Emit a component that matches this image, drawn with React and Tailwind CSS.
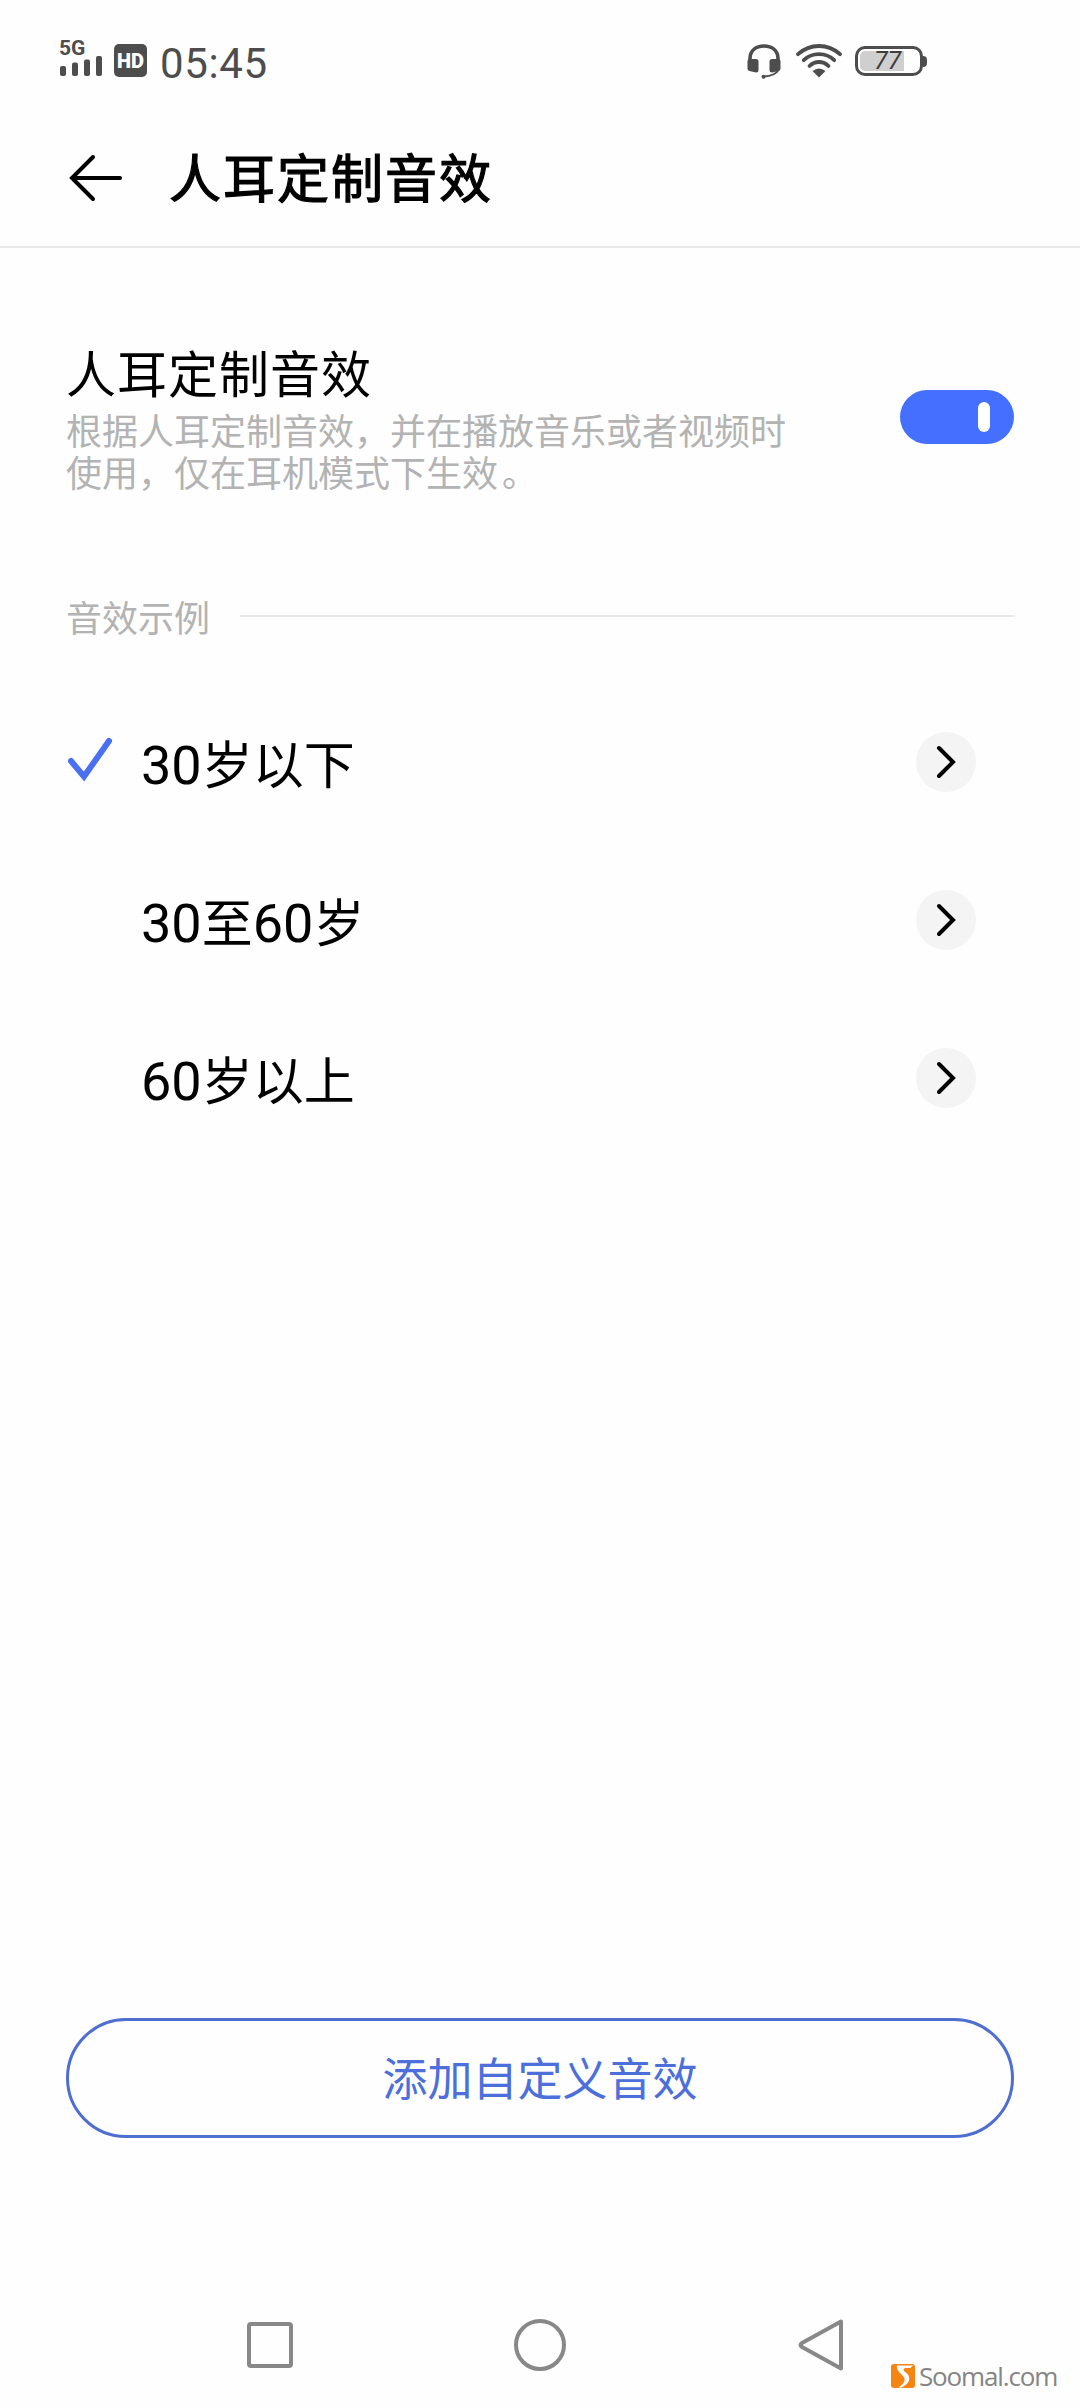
import React, { useState } from 'react';

const PRESETS = [
  { id: 'under30', parts: [{ num: '30' }, { zh: '岁以下' }] },
  { id: 'mid', parts: [{ num: '30' }, { zh: '至' }, { num: '60' }, { zh: '岁' }] },
  { id: 'over60', parts: [{ num: '60' }, { zh: '岁以上' }] },
];

const StatusBar = () => (
  <div className="h-[110px] pl-[60px] pr-[153px] flex items-start justify-between text-[#4d4d4d]">
    <div className="flex items-start">
      <div className="mt-[40px] w-[42px] flex flex-col">
        <span className="h-4 font-['Roboto',sans-serif] font-bold text-[21px] leading-[17px] -ml-px">5G</span>
        <svg width="42" height="20" viewBox="0 0 42 20" fill="currentColor">
          <rect x="0" y="10" width="6" height="10" rx="2" />
          <rect x="12" y="6.5" width="6" height="13.5" rx="2" />
          <rect x="24" y="3.5" width="6" height="16.5" rx="2" />
          <rect x="36" y="0" width="6" height="20" rx="2" />
        </svg>
      </div>
      <div className="mt-[44px] ml-3 w-[33px] h-[33px] rounded-[5px] bg-[#4d4d4d] text-white flex items-center justify-center font-['Roboto',sans-serif] font-black text-[20px] leading-none">
        HD
      </div>
      <span className="mt-[39px] ml-[13px] font-['Roboto',sans-serif] text-[42px] leading-[50px] tracking-[0.6px]">05:45</span>
    </div>

    <div className="flex items-start">
      <svg className="mt-[43px]" width="34" height="37" viewBox="0 0 34 37" fill="none">
        <path d="M3 19v-3.5C3 7.5 9 3 17 3s14 4.500 14 12.500V19" stroke="currentColor" strokeWidth="3.600" />
        <path d="M3 16h6q2.500 0 2.500 2.500V27q0 2.500-2.500 2.500L2.500 28Q.5 27.500.5 25.500V18.500Q.5 16 3 16Z" fill="currentColor" />
        <path d="M31 16h-6q-2.500 0-2.500 2.500V27q0 2.500 2.500 2.500l6.500-1.500q2-.5 2-2.500V18.500Q33.500 16 31 16Z" fill="currentColor" />
        <path d="M31.500 27q-3.500 6-14.500 6.500" stroke="currentColor" strokeWidth="1.800" />
        <circle cx="16.500" cy="33.800" r="2" fill="currentColor" />
      </svg>
      <svg className="mt-[43px] ml-[14px]" width="48" height="36" viewBox="0 0 48 36" fill="none" stroke="currentColor" strokeWidth="3.800" strokeLinecap="round">
        <path d="M3 11.200Q12 3 24 3t21 8.200" />
        <path d="M8.800 17.200Q15 11.200 24 11.200t15.200 6" />
        <path d="M14.500 23Q18.500 19 24 19t9.500 4" />
        <path d="M17.500 28Q24 23 30.500 28L24 34.500Z" fill="currentColor" stroke="none" />
      </svg>
      <div className="mt-[46px] ml-3 flex items-center">
        <div className="relative w-[68px] h-[30px] rounded-[10px] border-3 border-[#4d4d4d] p-[2px]">
          <div className="w-[44px] h-5 bg-[#cfcfcf] rounded-l-[5px]" />
          <span className="absolute left-[16px] top-0 font-['Roboto',sans-serif] text-[25px] leading-6 italic text-[#3d3d3d]">77</span>
        </div>
        <div className="w-1 h-[11px] bg-[#4d4d4d] rounded-r-full" />
      </div>
    </div>
  </div>
);

const PresetRow = ({ preset, selected, onSelect }) => (
  <div className="h-[158px] pl-[67px] pr-[104px] flex items-center cursor-pointer" onClick={onSelect}>
    <div className="w-[74px]">
      {selected && (
        <svg className="-mt-1" width="46" height="46" viewBox="0 0 46 46" fill="none">
          <path d="M4 24 17 39.500 42 4" stroke="#4a6ff0" strokeWidth="6" strokeLinecap="round" />
        </svg>
      )}
    </div>
    <div className="flex-1 pt-[3px] flex items-baseline text-black">
      {preset.parts.map((part, i) =>
        part.num ? (
          <span key={i} className="font-['Roboto',sans-serif] text-[54px] leading-[60px]">{part.num}</span>
        ) : (
          <span key={i} className="text-[51px] leading-[60px]">{part.zh}</span>
        )
      )}
    </div>
    <div className="w-[60px] h-[60px] rounded-full bg-[#f4f4f4] flex items-center justify-center">
      <svg width="24" height="36" viewBox="0 0 24 36" fill="none" stroke="#000" strokeWidth="4" strokeLinecap="round">
        <path d="M5 4l14 14L5 32" />
      </svg>
    </div>
  </div>
);

const App = () => {
  const [enabled, setEnabled] = useState(true);
  const [selected, setSelected] = useState('under30');

  return (
    <div className="w-[1080px] h-[2408px] bg-[#fefefe] flex flex-col overflow-hidden font-['Noto_Sans_CJK_SC',sans-serif]">
      <StatusBar />

      {/* Title bar */}
      <header className="h-[138px] pl-[68px] flex items-center border-b-2 border-[#e8e8e8]">
        <svg width="56" height="50" viewBox="0 0 56 50" fill="none" stroke="#000" strokeWidth="4" strokeLinecap="round">
          <path d="M52 25H4M25 4 4 25l21 21" />
        </svg>
        <h1 className="ml-[45px] pb-[4px] text-[52px] leading-[60px] tracking-[2px] text-black [-webkit-text-stroke:1.2px_#000]">人耳定制音效</h1>
      </header>

      {/* Main switch */}
      <section className="pt-[92px] pl-[66px] pr-[66px] h-[330px] flex justify-between">
        <div>
          <h2 className="text-[50px] leading-[62px] tracking-[1px] text-black">人耳定制音效</h2>
          <p className="mt-1.5 text-[36px] leading-[42px] text-[#b3b3b3]">
            根据人耳定制音效，并在播放音乐或者视频时
            <br />
            使用，仅在耳机模式下生效<span className="ml-1">。</span>
          </p>
        </div>
        <button
          type="button"
          onClick={() => setEnabled(!enabled)}
          className={`mt-[50px] w-[114px] h-[54px] rounded-full px-6 flex items-center cursor-pointer ${enabled ? 'bg-[#456fff] justify-end' : 'bg-[#cccccc] justify-start'}`}
        >
          <span className="w-3 h-[30px] rounded-full bg-white" />
        </button>
      </section>

      {/* Presets */}
      <div className="h-[76px] px-[66px] flex items-center">
        <span className="text-[36px] leading-[42px] text-[#b3b3b3]">音效示例</span>
        <div className="ml-[30px] flex-1 h-[2px] bg-[#e8e8e8]" />
      </div>
      <div className="mt-[29px]">
        {PRESETS.map((preset) => (
          <PresetRow
            key={preset.id}
            preset={preset}
            selected={selected === preset.id}
            onSelect={() => setSelected(preset.id)}
          />
        ))}
      </div>

      <div className="mt-auto px-[66px]">
        <button
          type="button"
          className="w-full h-[120px] pb-[3px] rounded-full border-3 border-[#4f6fd0] text-[#4c6fdc] text-[45px] leading-none cursor-pointer"
        >
          添加自定义音效
        </button>
      </div>

      {/* System navigation */}
      <nav className="relative mt-[180px] h-[90px] pl-[245px] flex items-start text-[#888888]">
        <svg width="50" height="54" viewBox="0 0 50 54" fill="none" stroke="currentColor" strokeWidth="4">
          <rect x="4" y="6" width="42" height="42" rx="2" />
        </svg>
        <svg className="ml-[218px]" width="54" height="54" viewBox="0 0 54 54" fill="none" stroke="currentColor" strokeWidth="4">
          <circle cx="27" cy="27" r="24" />
        </svg>
        <svg className="ml-[230px]" width="50" height="54" viewBox="0 0 50 54" fill="none" stroke="currentColor" strokeWidth="4" strokeLinejoin="round">
          <path d="M44 3.500v47L5 29q-3-2 0-4Z" />
        </svg>
        <div className="absolute left-[891px] top-[42px] flex items-center">
          <svg width="24" height="24" viewBox="0 0 24 24">
            <rect width="24" height="24" rx="3" fill="#f58410" />
            <path d="M6 1.500h16l-2.500 2.500h-5q-3.500.5-1 3.500 6 4 4.500 9-1.500 4-7.500 7h-3q7-5 6-9-.5-2-4.500-5.500-4-4-3-7.500Z" fill="#fff" />
          </svg>
          <span className="ml-1 font-['Open_Sans',sans-serif] text-[26px] leading-8 tracking-[-1.15px] text-[#858585]">Soomal.com</span>
        </div>
      </nav>
    </div>
  );
};

export default App;
